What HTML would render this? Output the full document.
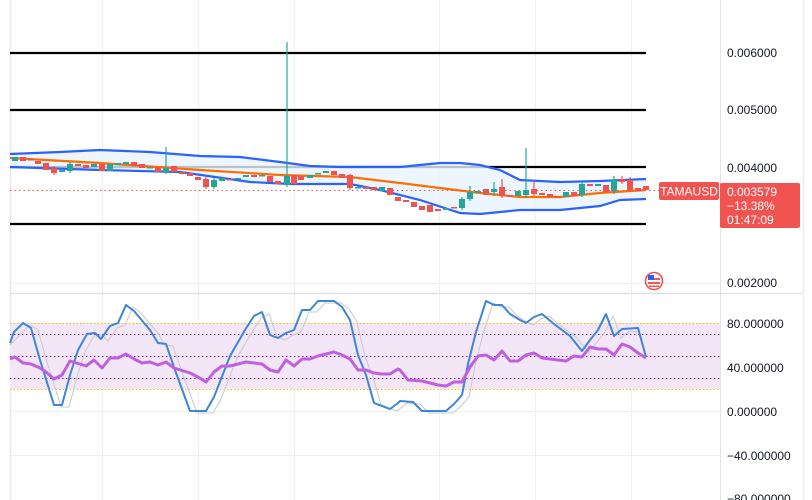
<!DOCTYPE html>
<html><head><meta charset="utf-8"><style>
html,body{margin:0;padding:0;background:#fff;width:812px;height:500px;overflow:hidden}
svg{display:block}
text{font-family:"Liberation Sans",sans-serif}
</style></head><body>
<svg width="812" height="500" viewBox="0 0 812 500" xmlns="http://www.w3.org/2000/svg">
<rect width="812" height="500" fill="#fff"/>
<!-- grid -->
<g stroke="#eef0f3" stroke-width="1">
<line x1="102.5" y1="0" x2="102.5" y2="500"/><line x1="198.5" y1="0" x2="198.5" y2="500"/><line x1="294.5" y1="0" x2="294.5" y2="500"/><line x1="439.5" y1="0" x2="439.5" y2="500"/><line x1="535.5" y1="0" x2="535.5" y2="500"/><line x1="631.5" y1="0" x2="631.5" y2="500"/>
<line x1="10" y1="283.5" x2="720" y2="283.5"/>
<line x1="10" y1="411.5" x2="720" y2="411.5"/><line x1="10" y1="455.5" x2="720" y2="455.5"/><line x1="10" y1="367.5" x2="720" y2="367.5"/>
</g>
<line x1="10.5" y1="0" x2="10.5" y2="500" stroke="#e6e8ee" stroke-width="1.5"/>
<line x1="720.5" y1="0" x2="720.5" y2="500" stroke="#e0e3eb"/>
<line x1="803.5" y1="0" x2="803.5" y2="500" stroke="#eef0f4" stroke-width="2"/>
<line x1="10" y1="293.5" x2="720" y2="293.5" stroke="#e0e3eb" stroke-width="1.5"/>
<line x1="720" y1="293.5" x2="803" y2="293.5" stroke="#e0e3eb"/>
<!-- black levels -->
<g stroke="#000" stroke-width="2.2">
<line x1="10" y1="53" x2="646" y2="53"/><line x1="10" y1="110" x2="646" y2="110"/><line x1="10" y1="167" x2="646" y2="167"/><line x1="10" y1="224" x2="646" y2="224"/>
</g>
<!-- bollinger fill -->
<path d="M10,154 L60,152 L100,150 L150,152 L200,156 L240,157 L280,162 L310,166 L340,167 L400,167 L440,163 L460,163 L480,165 L500,170 L520,180 L560,182 L600,181 L646,179 L646,199 L620,200 L600,206 L560,210 L520,210 L480,214 L460,213 L420,200 L380,190 L350,184 L290,184 L250,182 L180,172 L100,170 L10,167 Z" fill="#e8f3fd" opacity="0.8"/>
<polyline fill="none" stroke="#2962ff" stroke-width="2.2" points="10,154 60,152 100,150 150,152 200,156 240,157 280,162 310,166 340,167 400,167 440,163 460,163 480,165 500,170 520,180 560,182 600,181 646,179"/>
<polyline fill="none" stroke="#2962ff" stroke-width="2.2" points="10,167 100,170 180,172 250,182 290,184 350,184 380,190 420,200 460,213 480,214 520,210 560,210 600,206 620,200 646,199"/>
<polyline fill="none" stroke="#ff6d00" stroke-width="2.2" points="10,158 100,163 200,170 280,175 350,177 400,183 440,188 480,193 520,197 560,197 600,193 646,190"/>
<line x1="10" y1="190.5" x2="720" y2="190.5" stroke="#f05350" stroke-dasharray="1.5,3"/>
<!-- wicks -->
<g stroke="#26a69a" stroke-width="1.2">
<line x1="287" y1="42" x2="287" y2="187"/><line x1="166" y1="147" x2="166" y2="174"/><line x1="526" y1="148" x2="526" y2="198"/>
<line x1="70" y1="162" x2="70" y2="173"/><line x1="214" y1="178" x2="214" y2="189"/><line x1="462" y1="197" x2="462" y2="210"/><line x1="470" y1="186" x2="470" y2="201"/><line x1="614" y1="176" x2="614" y2="194"/><line x1="582" y1="181" x2="582" y2="197"/><line x1="494" y1="182" x2="494" y2="196"/>
</g>
<g stroke="#ef5350" stroke-width="1.2">
<line x1="502" y1="179" x2="502" y2="198"/><line x1="534" y1="180" x2="534" y2="196"/><line x1="350" y1="174" x2="350" y2="190"/><line x1="622" y1="176" x2="622" y2="184"/><line x1="630" y1="177" x2="630" y2="192"/><line x1="54" y1="166" x2="54" y2="175"/><line x1="206" y1="177" x2="206" y2="189"/>
</g>
<g fill="#26a69a">
<rect x="12" y="157" width="6" height="4"/><rect x="59" y="170" width="6" height="2"/><rect x="67" y="164" width="6" height="7"/><rect x="91" y="164" width="6" height="3"/><rect x="107" y="164" width="6" height="7"/><rect x="115" y="163" width="6" height="2"/><rect x="123" y="162" width="6" height="2"/><rect x="147" y="167" width="6" height="1.5"/><rect x="163" y="168" width="6" height="4"/><rect x="211" y="180" width="6" height="7"/><rect x="219" y="178" width="6" height="3"/><rect x="235" y="178" width="6" height="1.5"/><rect x="243" y="175" width="6" height="2"/><rect x="259" y="175" width="6" height="1.5"/><rect x="284" y="176" width="6" height="9"/><rect x="307" y="175" width="6" height="3"/><rect x="315" y="173" width="6" height="1.5"/><rect x="323" y="171" width="6" height="2"/><rect x="355" y="187" width="6" height="1.5"/><rect x="379" y="187" width="6" height="4"/><rect x="443" y="208" width="6" height="2"/><rect x="459" y="199" width="6" height="9"/><rect x="467" y="192" width="6" height="7"/><rect x="475" y="191" width="6" height="2"/><rect x="491" y="189" width="6" height="3"/><rect x="515" y="191" width="6" height="5"/><rect x="523" y="190" width="6" height="5"/><rect x="563" y="192" width="6" height="5"/><rect x="579" y="184" width="6" height="11"/><rect x="595" y="184" width="6" height="2"/><rect x="611" y="179" width="6" height="12"/>
</g>
<g fill="#ef5350">
<rect x="20" y="157" width="6" height="4"/><rect x="28" y="159" width="6" height="1.5"/><rect x="35" y="161" width="6" height="3"/><rect x="43" y="163" width="6" height="7"/><rect x="51" y="168" width="6" height="5"/><rect x="75" y="164" width="6" height="2"/><rect x="83" y="165" width="6" height="3"/><rect x="99" y="164" width="6" height="7"/><rect x="131" y="162" width="6" height="4"/><rect x="139" y="164" width="6" height="4"/><rect x="155" y="167" width="6" height="5"/><rect x="171" y="166" width="6" height="6"/><rect x="179" y="172" width="6" height="2"/><rect x="187" y="173" width="6" height="3"/><rect x="195" y="177" width="6" height="3"/><rect x="203" y="179" width="6" height="8"/><rect x="227" y="179" width="6" height="1.5"/><rect x="251" y="175" width="6" height="2"/><rect x="267" y="176" width="6" height="6"/><rect x="275" y="181" width="6" height="3"/><rect x="291" y="175" width="6" height="9"/><rect x="298" y="176" width="6" height="4"/><rect x="331" y="171" width="6" height="4"/><rect x="339" y="174" width="6" height="4"/><rect x="347" y="175" width="6" height="13"/><rect x="363" y="187" width="6" height="2"/><rect x="371" y="187" width="6" height="3"/><rect x="387" y="188" width="6" height="7"/><rect x="395" y="197" width="6" height="4"/><rect x="403" y="200" width="6" height="2"/><rect x="411" y="202" width="6" height="5"/><rect x="419" y="206" width="6" height="4"/><rect x="427" y="205" width="6" height="7"/><rect x="435" y="209" width="6" height="2"/><rect x="451" y="207" width="6" height="1.5"/><rect x="483" y="189" width="6" height="6"/><rect x="499" y="187" width="6" height="9"/><rect x="507" y="195" width="6" height="2"/><rect x="531" y="189" width="6" height="5"/><rect x="539" y="193" width="6" height="2"/><rect x="547" y="194" width="6" height="3"/><rect x="555" y="196" width="6" height="1.5"/><rect x="571" y="192" width="6" height="4"/><rect x="587" y="184" width="6" height="2"/><rect x="603" y="185" width="6" height="7"/><rect x="619" y="179" width="6" height="3"/><rect x="627" y="180" width="6" height="10"/><rect x="635" y="188" width="6" height="3"/><rect x="643" y="186" width="6" height="4"/>
</g>
<!-- labels -->
<rect x="659" y="182" width="60" height="18" rx="2" fill="#f05350"/>
<text x="689" y="195.5" font-size="12" fill="#fff" text-anchor="middle">TAMAUSD</text>
<rect x="720" y="183" width="80" height="45" rx="2" fill="#f05350"/>
<text x="727" y="196" font-size="12" fill="#fff">0.003579</text>
<text x="727" y="210" font-size="12" fill="#fff">−13.38%</text>
<text x="727" y="224" font-size="12" fill="#fff">01:47:09</text>
<g font-size="12" fill="#131722">
<text x="727" y="57">0.006000</text><text x="727" y="114">0.005000</text><text x="727" y="172">0.004000</text><text x="727" y="287">0.002000</text>
<text x="727" y="328">80.000000</text><text x="727" y="372">40.000000</text><text x="727" y="416">0.000000</text><text x="727" y="460">−40.000000</text><text x="727" y="503">−80.000000</text>
</g>
<!-- flag -->
<circle cx="654" cy="281" r="8.5" fill="#fff" stroke="#f05350" stroke-width="1.6"/>
<rect x="648" y="278" width="12" height="2" fill="#f05350"/><rect x="648" y="282" width="12" height="2" fill="#f05350"/><rect x="649" y="285.5" width="10" height="1.5" fill="#f05350"/>
<rect x="648" y="275" width="6" height="5" fill="#2962ff"/>
<!-- RSI band -->
<rect x="10" y="323" width="710" height="66" fill="#f3e6f7"/>
<g stroke-width="1" fill="none">
<line x1="10" y1="323.5" x2="720" y2="323.5" stroke="#f0c800" stroke-dasharray="1.5,2"/>
<line x1="10" y1="389.5" x2="720" y2="389.5" stroke="#f0c800" stroke-dasharray="1.5,2"/>
<line x1="10" y1="334.5" x2="720" y2="334.5" stroke="#8e24aa" stroke-dasharray="1.5,2.5"/>
<line x1="10" y1="356.5" x2="720" y2="356.5" stroke="#8e24aa" stroke-dasharray="1.5,2.5"/>
<line x1="10" y1="378.5" x2="720" y2="378.5" stroke="#8e24aa" stroke-dasharray="1.5,2.5"/>
</g>
<polyline fill="none" stroke="#c8c8d0" stroke-width="1" transform="translate(7,2)" points="3,343 14,332 23,323 31,328 40,360 54,405 62,405 70,375 78,350 87,334 95,333 101,339 110,326 118,323 126,305 134,311 150,330 158,343 166,344 175,370 190,411 206,411 214,397 230,356 245,330 254,316 262,312 270,335 278,338 286,333 294,330 302,310 310,310 318,301 334,301 342,307 350,320 358,355 366,375 374,403 390,409 400,401 413,402 422,411 439,411 446,411 454,404 462,395 468,364 476,332 486,301 494,305 502,305 510,314 520,320 526,323 534,317 542,314 554,324 570,336 582,351 590,340 598,330 606,314 614,336 622,329 632,330"/>
<polyline fill="none" stroke="#3d85d8" stroke-width="2" stroke-linejoin="round" points="10,343 14,332 23,323 31,328 40,360 54,405 62,405 70,375 78,350 87,334 95,333 101,339 110,326 118,323 126,305 134,311 150,330 158,343 166,344 175,370 190,411 206,411 214,397 230,356 245,330 254,316 262,312 270,335 278,338 286,333 294,330 302,310 310,310 318,301 334,301 342,307 350,320 358,355 366,375 374,403 390,409 398,403 400,401 413,402 422,411 439,411 446,411 454,404 462,395 468,364 476,332 486,301 494,305 502,305 510,314 520,320 526,323 534,317 542,314 554,324 570,336 582,351 590,340 598,330 606,314 614,336 622,329 638,328 646,357"/>
<polyline fill="none" stroke="#c060e0" stroke-width="3" stroke-linejoin="round" points="10,359 15,357 23,363 31,364 40,368 46,372 54,379 62,375 70,361 86,366 94,360 102,368 110,358 118,358 126,354 134,359 142,363 150,362 158,365 166,362 174,368 190,373 198,377 206,382 214,372 222,366 230,366 246,362 262,364 270,370 278,372 286,360 294,366 302,359 310,359 318,356 334,352 342,355 350,359 358,370 366,370 374,373 382,374 390,374 398,369 400,370 408,380 422,381 438,385 446,386 454,382 462,382 470,367 478,356 486,355 494,360 502,351 510,361 518,361 526,355 534,353 542,358 566,361 574,356 582,357 590,347 598,349 606,349 614,355 622,344 630,347 638,353 646,358"/>
</svg>
</body></html>
